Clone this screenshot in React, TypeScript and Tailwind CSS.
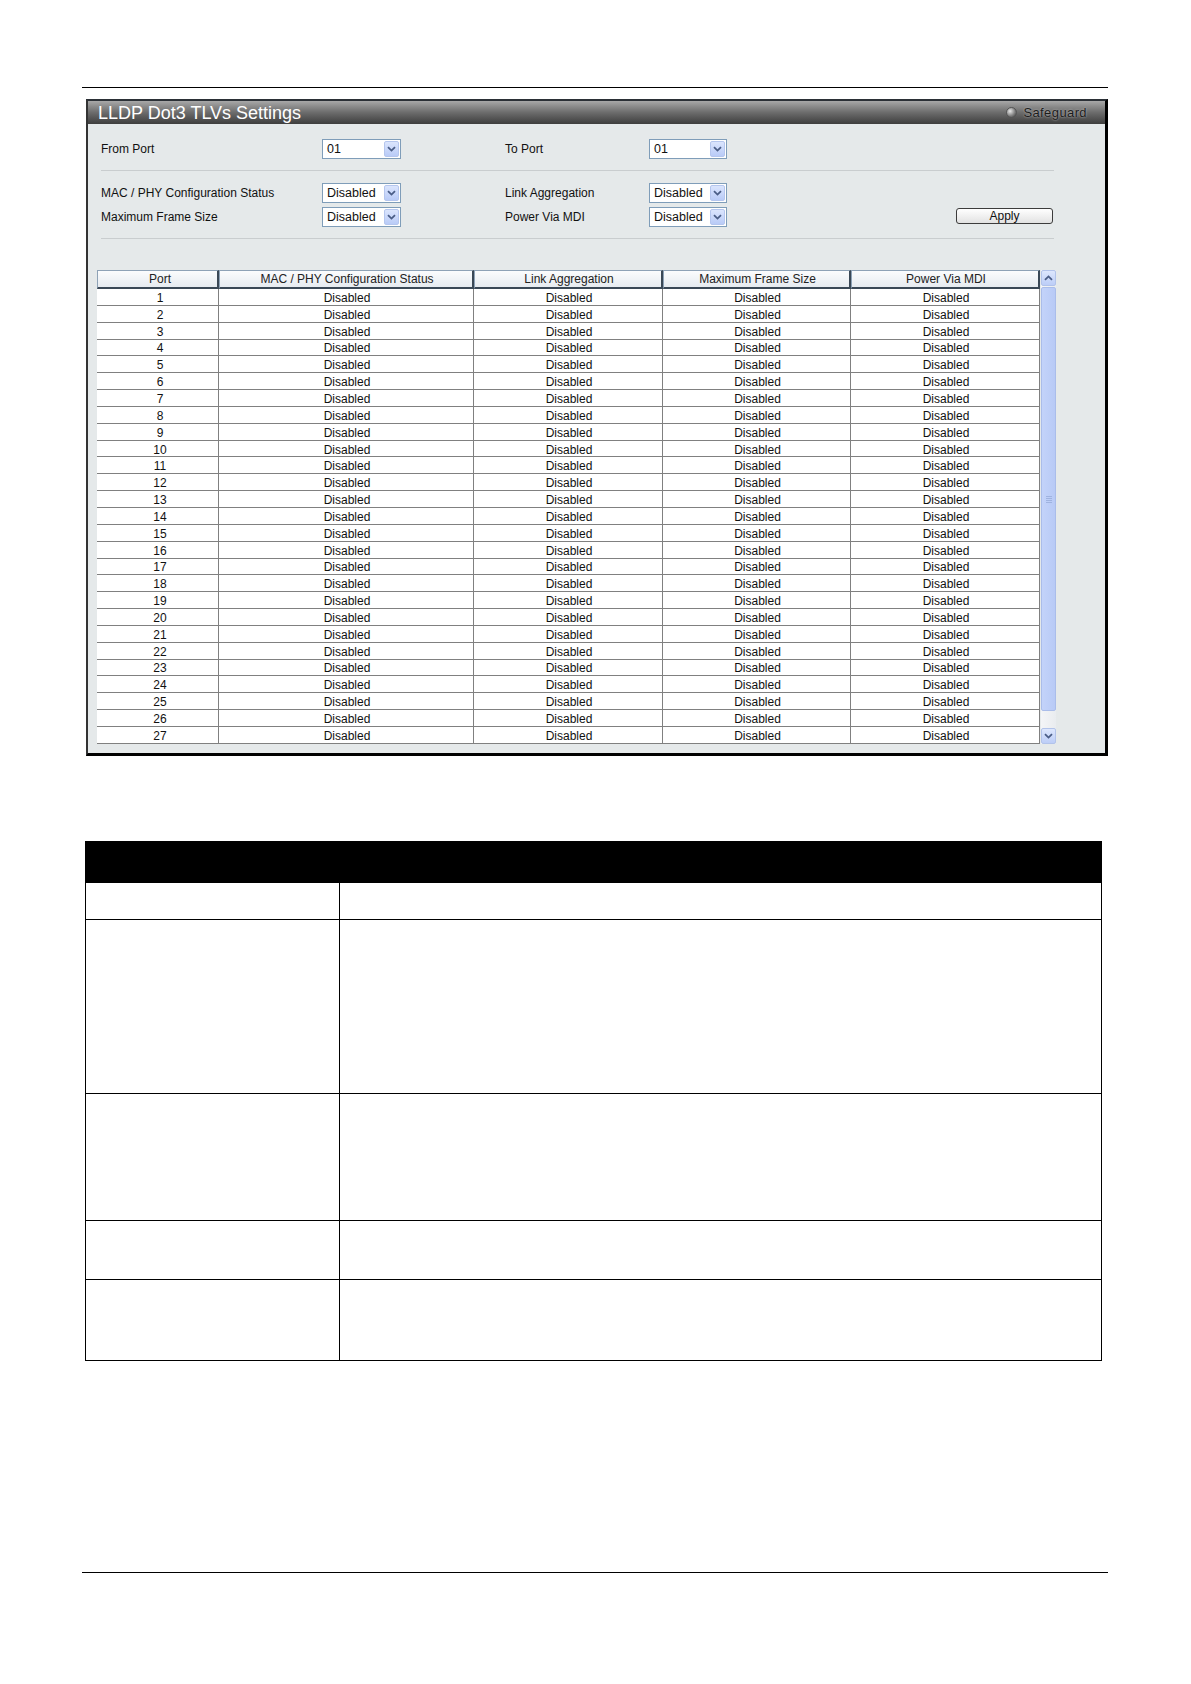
import React from 'react';

const ROWS = Array.from({ length: 27 }, (_, i) => i + 1);

function Chevron({ up = false }: { up?: boolean }) {
  return (
    <svg width="9" height="6" viewBox="0 0 9 6" className={up ? 'rotate-180' : ''}>
      <path d="M1 1.2 L4.5 4.6 L8 1.2" fill="none" stroke="#4a5d86" strokeWidth="1.8" />
    </svg>
  );
}

function Select({ value, width }: { value: string; width: string }) {
  return (
    <div className={`flex h-[20px] ${width} items-stretch border border-[#7f9db9] bg-white p-px`}>
      <span className="flex flex-1 items-center pl-[3px] text-[12.5px] leading-none text-[#111]">{value}</span>
      <span className="flex w-[15px] items-center justify-center rounded-[2px] border border-[#b5c6ee] bg-gradient-to-b from-[#dbe5fd] to-[#b9cbf7]">
        <Chevron />
      </span>
    </div>
  );
}

function HeaderCell({ label, width, pad = '' }: { label: string; width: string; pad?: string }) {
  return (
    <div
      className={`flex ${width} ${pad} h-[19px] items-center justify-center border border-[#8ea2b6] border-b-2 border-r-2 border-b-[#3a4856] border-r-[#3a4856] bg-gradient-to-b from-[#fbfcfd] to-[#e6ebf0] text-[12px] leading-none text-[#222]`}
    >
      {label}
    </div>
  );
}

function BodyCell({ children, width, pad = '' }: { children: React.ReactNode; width: string; pad?: string }) {
  return (
    <div className={`flex ${width} ${pad} items-center justify-center border-r border-[#808080] pt-[2px] text-[12px] leading-none text-[#111]`}>
      {children}
    </div>
  );
}

function Scrollbar() {
  return (
    <div className="flex w-[15px] flex-col bg-gradient-to-r from-[#f4f5f7] to-[#e9ecef]">
      <div className="flex h-[16px] items-center justify-center rounded-[2px] border border-[#b2c3ea] bg-gradient-to-b from-[#dde7fd] to-[#bccdf7]">
        <Chevron up />
      </div>
      <div className="mt-[1px] flex h-[424px] items-center justify-center rounded-[2px] border border-[#aabdea] bg-gradient-to-r from-[#c3d3fa] to-[#b8caf6]">
        <div className="flex flex-col gap-[1px]">
          <span className="h-px w-[6px] bg-[#9fb3e0]" />
          <span className="h-px w-[6px] bg-[#9fb3e0]" />
          <span className="h-px w-[6px] bg-[#9fb3e0]" />
          <span className="h-px w-[6px] bg-[#9fb3e0]" />
        </div>
      </div>
      <div className="flex-1" />
      <div className="flex h-[16px] items-center justify-center rounded-[2px] border border-[#b2c3ea] bg-gradient-to-b from-[#dde7fd] to-[#bccdf7]">
        <Chevron />
      </div>
    </div>
  );
}

export default function App() {
  return (
    <div className="min-h-[1684px] w-[1191px] bg-white pt-[87px] font-['Liberation_Sans',Arial,sans-serif]">
      <div className="ml-[82px] h-px w-[1026px] bg-black" />

      {/* settings panel */}
      <div className="ml-[86px] mt-[11px] h-[657px] w-[1022px] border-l-2 border-t-2 border-r-[3px] border-b-[3px] border-l-[#333] border-t-[#2b3036] border-r-black border-b-black bg-[#e5e9ea]">
        <div className="flex h-[23px] items-center justify-between bg-gradient-to-b from-[#a8a8a8] via-[#6c6c6c] to-[#3e3e3e] pl-[10px] pr-[18px]">
          <span className="text-[18px] leading-none text-white">LLDP Dot3 TLVs Settings</span>
          <div className="flex items-center gap-[6px]">
            <span className="h-[11px] w-[11px] rounded-full border border-[#555] bg-[radial-gradient(circle_at_35%_35%,#e8e8e8,#7a7a7a_60%,#3a3a3a)]" />
            <span className="text-[13px] leading-none tracking-[0.4px] text-[#1c1c1c] [text-shadow:0_0_2px_#c8c8c8]">Safeguard</span>
          </div>
        </div>

        <div className="pl-[13px] pt-[15px] text-[12px] text-[#111]">
          <div className="flex h-[20px] items-center">
            <span className="w-[221px]">From Port</span>
            <Select value="01" width="w-[79px]" />
            <span className="ml-[104px] w-[144px]">To Port</span>
            <Select value="01" width="w-[78px]" />
          </div>
          <div className="mt-[11px] h-px w-[953px] bg-[#c9cdcf]" />
          <div className="mt-[12px] flex h-[20px] items-center">
            <span className="w-[221px]">MAC / PHY Configuration Status</span>
            <Select value="Disabled" width="w-[79px]" />
            <span className="ml-[104px] w-[144px]">Link Aggregation</span>
            <Select value="Disabled" width="w-[78px]" />
          </div>
          <div className="mt-[4px] flex h-[20px] items-start">
            <span className="w-[221px] self-center">Maximum Frame Size</span>
            <Select value="Disabled" width="w-[79px]" />
            <span className="ml-[104px] w-[144px] self-center">Power Via MDI</span>
            <Select value="Disabled" width="w-[78px]" />
            <button className="ml-[229px] mt-[1px] h-[16px] w-[97px] rounded-[3px] border border-[#3c3c3c] bg-gradient-to-b from-white to-[#e2e2e2] text-[12px] leading-none text-[#111]">
              Apply
            </button>
          </div>
          <div className="mt-[11px] h-px w-[953px] bg-[#c9cdcf]" />
        </div>

        {/* port table */}
        <div className="ml-[9px] mt-[31px] flex">
          <div className="w-[943px]">
            <div className="flex">
              <HeaderCell label="Port" width="w-[122px]" pad="pl-[5px]" />
              <HeaderCell label="MAC / PHY Configuration Status" width="w-[255px]" pad="pl-[2px]" />
              <HeaderCell label="Link Aggregation" width="w-[189px]" pad="pl-[2px]" />
              <HeaderCell label="Maximum Frame Size" width="w-[188px]" pad="pl-[2px]" />
              <HeaderCell label="Power Via MDI" width="w-[189px]" pad="pl-[2px]" />
            </div>
            <div className="bg-white">
              {ROWS.map(n => (
                <div key={n} className="flex h-[16.85px] border-b border-[#808080]">
                  <BodyCell width="w-[122px]" pad="pl-[5px]">{n}</BodyCell>
                  <BodyCell width="w-[255px]" pad="pl-[2px]">Disabled</BodyCell>
                  <BodyCell width="w-[189px]" pad="pl-[2px]">Disabled</BodyCell>
                  <BodyCell width="w-[188px]" pad="pl-[2px]">Disabled</BodyCell>
                  <BodyCell width="w-[189px]" pad="pl-[2px]">Disabled</BodyCell>
                </div>
              ))}
            </div>
          </div>
          <div className="ml-px flex">
            <Scrollbar />
          </div>
        </div>
      </div>

      {/* parameter description table */}
      <div className="ml-[85px] mt-[85px] w-[1017px] border-[1.5px] border-black">
        <div className="h-[41px] bg-black" />
        {[36, 174, 127, 59, 81].map((h, i) => (
          <div
            key={i}
            className={`flex ${i > 0 ? 'border-t-[1.5px] border-black' : ''}`}
            style={{ height: h }}
          >
            <div className="w-[254px] border-r-[1.5px] border-black" />
            <div className="flex-1" />
          </div>
        ))}
      </div>

      <div className="ml-[82px] mt-[211px] h-px w-[1026px] bg-black" />
    </div>
  );
}
